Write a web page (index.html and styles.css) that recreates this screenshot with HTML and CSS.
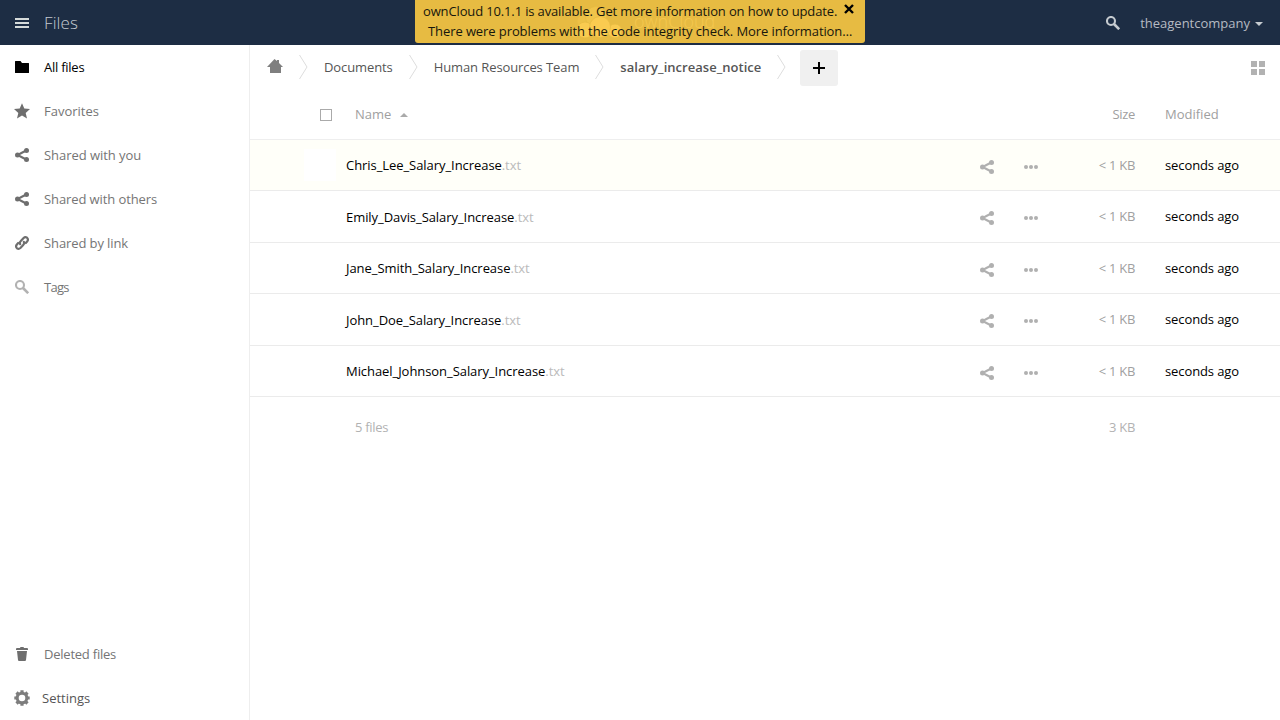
FILE: index.html
```html
<!DOCTYPE html>
<html lang="en">
<head>
<meta charset="utf-8">
<title>Files - ownCloud</title>
<link rel="stylesheet" href="styles.css">
</head>
<body>
<svg class="sprite" aria-hidden="true">
  <symbol id="share" viewBox="0 0 14 14"><path d="M11.2 2.500 2.600 7l8.600 4.500" fill="none" stroke="currentColor" stroke-width="2.100"/><circle cx="2.500" cy="7" r="2.500"/><circle cx="11.500" cy="2.500" r="2.500"/><circle cx="11.500" cy="11.500" r="2.500"/></symbol>
  <symbol id="search" viewBox="0 0 14 14"><circle cx="5" cy="5" r="4" fill="none" stroke="currentColor" stroke-width="2.100"/><path d="m8 8 5.200 5.200" stroke="currentColor" stroke-width="2.600"/></symbol>
  <symbol id="dots" viewBox="0 0 14 4"><circle cx="2" cy="2" r="2"/><circle cx="7" cy="2" r="2"/><circle cx="12" cy="2" r="2"/></symbol>
  <symbol id="chevron" viewBox="0 0 9 26"><path d="m.5 1 7.500 12-7.500 12" fill="none" stroke="currentColor"/></symbol>
</svg>
<header class="topbar">
  <svg class="menu-icon" viewBox="0 0 14 10"><path d="M0 0h14v2H0zM0 4h14v2H0zM0 8h14v2H0z"/></svg>
  <h1 class="app-name">Files</h1>
  <svg class="search-icon"><use href="#search"/></svg>
  <span class="user">theagentcompany</span>
  <svg class="caret" viewBox="0 0 8 4"><path d="M0 0h8L4 4z"/></svg>
  <div class="notification">
    <div class="brand">
      <svg class="cloud" viewBox="0 0 54 32"><g stroke="#e7bb42" stroke-width=".8"><circle cx="13" cy="15" r="6" fill="#edc147"/><circle cx="26" cy="11" r="10.500" fill="#f0c44a"/><circle cx="5" cy="27" r="4.600" fill="#f0c44a"/><circle cx="15" cy="24" r="8"/><circle cx="45" cy="25" r="7"/><circle cx="30" cy="21" r="10.500"/></g></svg>
      <span>ownCloud</span>
    </div>
    <p class="notice">ownCloud 10.1.1 is available. Get more information on how to update.</p>
    <p class="notice second">There were problems with the code integrity check. More information…</p>
    <svg class="close" viewBox="0 0 10 10"><path d="m1 1 8 8M9 1 1 9" stroke="#000" stroke-width="2.400"/></svg>
  </div>
</header>
<div class="layout">
  <nav class="sidebar">
    <a class="nav-item active"><svg class="nav-icon" viewBox="0 0 14 14"><path d="M.5 1h5L7 3h6.500q.5 0 .5.500v9q0 .5-.5.500h-13q-.5 0-.5-.500v-11Q0 1 .5 1z"/></svg>All files</a>
    <a class="nav-item"><svg class="nav-icon star" viewBox="0 0 16 16"><path d="m8 .3 2.300 5.300 5.700.500-4.300 3.800 1.300 5.700L8 12.600l-5 3 1.300-5.700L0 6.100l5.700-.500z"/></svg><span class="loose">Favorites</span></a>
    <a class="nav-item"><svg class="nav-icon"><use href="#share"/></svg><span class="you">Shared with you</span></a>
    <a class="nav-item"><svg class="nav-icon"><use href="#share"/></svg>Shared with others</a>
    <a class="nav-item"><svg class="nav-icon" viewBox="0 0 14 14"><g fill="none" stroke="currentColor" stroke-width="2.200" stroke-linecap="round"><path d="M5.200 8.200q-.8-1.800.6-3.200l2.800-3Q10.200.500 12 1.700q1.700 1.700.300 3.500L10.800 7"/><path d="M8.800 5.800q.8 1.800-.6 3.200l-2.800 3Q3.800 13.500 2 12.300.300 10.600 1.700 8.800L3.200 7"/></g></svg>Shared by link</a>
    <a class="nav-item"><svg class="nav-icon faint"><use href="#search"/></svg><span class="tight">Tags</span></a>
    <div class="nav-bottom">
      <a class="nav-item"><svg class="nav-icon" viewBox="0 0 14 14"><path d="M1 2q0-1 1-1h3q0-1 1-1h2q1 0 1 1h3q1 0 1 1v1H1zM2 4h10l-1 9q-.1 1-1 1H4q-.9 0-1-1z"/></svg><span class="snug">Deleted files</span></a>
      <a class="nav-item settings"><svg class="nav-icon gear" viewBox="0 0 16 16"><circle cx="8" cy="8" r="4.800" fill="none" stroke="currentColor" stroke-width="3"/><path d="M8 .3v3M8 12.700v3M.3 8h3M12.700 8h3M2.500 2.500l2 2M11.500 11.500l2 2M2.500 13.500l2-2M11.500 4.500l2-2" stroke="currentColor" stroke-width="3.200"/></svg><span class="loose">Settings</span></a>
    </div>
  </nav>
  <main class="content">
    <div class="controls">
      <svg class="home" viewBox="0 0 16 14"><path d="M7.500 0 10 2V1h2v3l4 4h-2v6H3V8H0z"/></svg>
      <svg class="sep"><use href="#chevron"/></svg>
      <a class="crumb">Documents</a>
      <svg class="sep"><use href="#chevron"/></svg>
      <a class="crumb">Human Resources Team</a>
      <svg class="sep"><use href="#chevron"/></svg>
      <a class="crumb current">salary_increase_notice</a>
      <svg class="sep last"><use href="#chevron"/></svg>
      <button class="add" aria-label="New"><svg viewBox="0 0 12 12"><path d="M5 0h2v5h5v2H7v5H5V7H0V5h5z"/></svg></button>
      <svg class="grid-icon" viewBox="0 0 14 14"><path d="M0 0h6v6H0zM8 0h6v6H8zM0 8h6v6H0zM8 8h6v6H8z"/></svg>
    </div>
    <div class="table-head">
      <span class="checkbox"></span>
      <span class="head-name">Name</span>
      <svg class="sort" viewBox="0 0 8 4"><path d="M0 4h8L4 0z"/></svg>
      <span class="size">Size</span>
      <span class="modified">Modified</span>
    </div>
    <div class="row hovered"><span class="thumb"></span><span class="name">Chris_Lee_Salary_Increase<i>.txt</i></span><svg class="share"><use href="#share"/></svg><svg class="dots"><use href="#dots"/></svg><span class="size">&lt; 1 KB</span><span class="modified">seconds ago</span></div>
    <div class="row tall"><span class="thumb"></span><span class="name">Emily_Davis_Salary_Increase<i>.txt</i></span><svg class="share"><use href="#share"/></svg><svg class="dots"><use href="#dots"/></svg><span class="size">&lt; 1 KB</span><span class="modified">seconds ago</span></div>
    <div class="row"><span class="thumb"></span><span class="name">Jane_Smith_Salary_Increase<i>.txt</i></span><svg class="share"><use href="#share"/></svg><svg class="dots"><use href="#dots"/></svg><span class="size">&lt; 1 KB</span><span class="modified">seconds ago</span></div>
    <div class="row tall"><span class="thumb"></span><span class="name">John_Doe_Salary_Increase<i>.txt</i></span><svg class="share"><use href="#share"/></svg><svg class="dots"><use href="#dots"/></svg><span class="size">&lt; 1 KB</span><span class="modified">seconds ago</span></div>
    <div class="row"><span class="thumb"></span><span class="name">Michael_Johnson_Salary_Increase<i>.txt</i></span><svg class="share"><use href="#share"/></svg><svg class="dots"><use href="#dots"/></svg><span class="size">&lt; 1 KB</span><span class="modified">seconds ago</span></div>
    <div class="summary"><span class="count">5 files</span><span class="size">3 KB</span><span class="modified"></span></div>
  </main>
</div>
</body>
</html>
```
FILE: styles.css
```css
* { box-sizing: border-box; }
body { margin: 0; height: 720px; overflow: hidden; background: #fff; color: #000; font: 13px/20px "Open Sans", sans-serif; }
svg { display: block; flex: none; fill: currentColor; }
.sprite { position: absolute; width: 0; height: 0; }

.topbar { position: relative; display: flex; align-items: center; height: 45px; padding: 0 17px 0 15px; background: #1d2d44; color: #b5bac2; }
.menu-icon { width: 14px; height: 10px; color: #d5dada; }
.app-name { flex: 1; margin: 0 0 0 15px; font-size: 17px; font-weight: 300; line-height: 45px; letter-spacing: .1px; color: #c4c9d0; }
.search-icon { width: 14px; height: 14px; margin-right: 20px; color: #c6cbd0; }
.user { line-height: 45px; padding-top: 1px; }
.caret { width: 8px; height: 4px; margin: 2px 0 0 5px; color: #c6cbd0; }

.notification { position: absolute; left: 415px; top: 0; width: 450px; height: 43px; padding-top: 1px; background: #e7bb42; border-radius: 0 0 3px 3px; color: #17170d; }
.notice { position: relative; margin: 0; padding-left: 8px; white-space: nowrap; letter-spacing: -.14px; }
.notice.second { padding-left: 13px; letter-spacing: -.09px; }
.brand { position: absolute; left: 155px; top: 6px; display: flex; color: #facb50; }
.brand span { margin: 5px 0 0 10px; font-size: 18px; font-weight: 300; color: #f5c84f; }
.cloud { width: 54px; height: 32px; }
.close { position: absolute; left: 429px; top: 4px; width: 10px; height: 10px; }

.layout { display: flex; height: 675px; }
.sidebar { display: flex; flex-direction: column; width: 250px; border-right: 1px solid #eee; }
.nav-item { display: flex; align-items: center; height: 44px; padding-left: 15px; gap: 15px; color: #757575; letter-spacing: -.1px; }
.nav-item.active { color: #000; letter-spacing: -.25px; }
.nav-item.settings { gap: 12px; padding-left: 14px; color: #555; }
.loose { letter-spacing: 0; }
.you { letter-spacing: -.05px; }
.snug { letter-spacing: -.23px; }
.tight { letter-spacing: -.7px; }
.nav-icon { width: 14px; height: 14px; color: #6e6e6e; }
.active .nav-icon { color: #000; }
.nav-icon.star { width: 16px; height: 16px; margin: 0 -1px; }
.nav-icon.gear { width: 16px; height: 16px; color: #7d7d7d; }
.nav-icon.faint { color: #b2b2b2; }
.nav-bottom { margin-top: auto; }

.content { flex: 1; min-width: 0; }
.controls { display: flex; align-items: center; height: 44px; padding: 0 15px 0 17px; color: #555; }
.home { width: 16px; height: 14px; margin-top: -2px; color: #7f7f7f; }
.sep { width: 9px; height: 26px; margin: 0 16px; color: #ddd; }
.sep.last { margin-right: 14px; }
.crumb { letter-spacing: -.1px; }
.crumb.current { font-weight: 600; letter-spacing: .03px; }
.add { display: grid; place-items: center; width: 38px; height: 36px; margin-top: 2px; padding: 0; border: 0; border-radius: 3px; background: #f0f0f0; color: #000; }
.add svg { width: 12px; height: 12px; }
.grid-icon { width: 14px; height: 14px; margin: 2px 0 0 auto; color: #b2b2b2; }

.table-head, .row, .summary { display: flex; align-items: center; color: #a0a0a0; }
.table-head { height: 51px; border-bottom: 1px solid #eee; padding-left: 70px; }
.checkbox { width: 12px; height: 12px; margin-top: 1px; border: 1px solid #aaa; }
.head-name { margin-left: 23px; }
.sort { width: 8px; height: 4px; margin: 1px 0 0 9px; color: #aaa; }
.size { width: 80px; text-align: right; letter-spacing: -.3px; }
.table-head .size { margin-left: auto; }
.modified { width: 115px; margin-left: 30px; }
.row { height: 51px; padding-left: 54px; border-bottom: 1px solid #ebebeb; }
.row.tall { height: 52px; }
.row.hovered { background: #fffff9; }
.thumb { width: 32px; height: 32px; margin-right: 10px; background: #fff; }
.name { flex: 1; color: #000; letter-spacing: -.06px; }
.name i { font-style: normal; color: #bbb; }
.row .modified { color: #000; letter-spacing: -.1px; }
.row.tall .size, .row.tall .modified { padding-bottom: 2px; }
.share { width: 14px; height: 14px; margin: 3px 30px 0 0; color: #b0b0b0; }
.dots { width: 14px; height: 4px; margin: 3px 17px 0 0; color: #b0b0b0; }
.summary { height: 60px; padding-left: 105px; color: #b2b2b2; }
.count { flex: 1; letter-spacing: -.3px; }
```
